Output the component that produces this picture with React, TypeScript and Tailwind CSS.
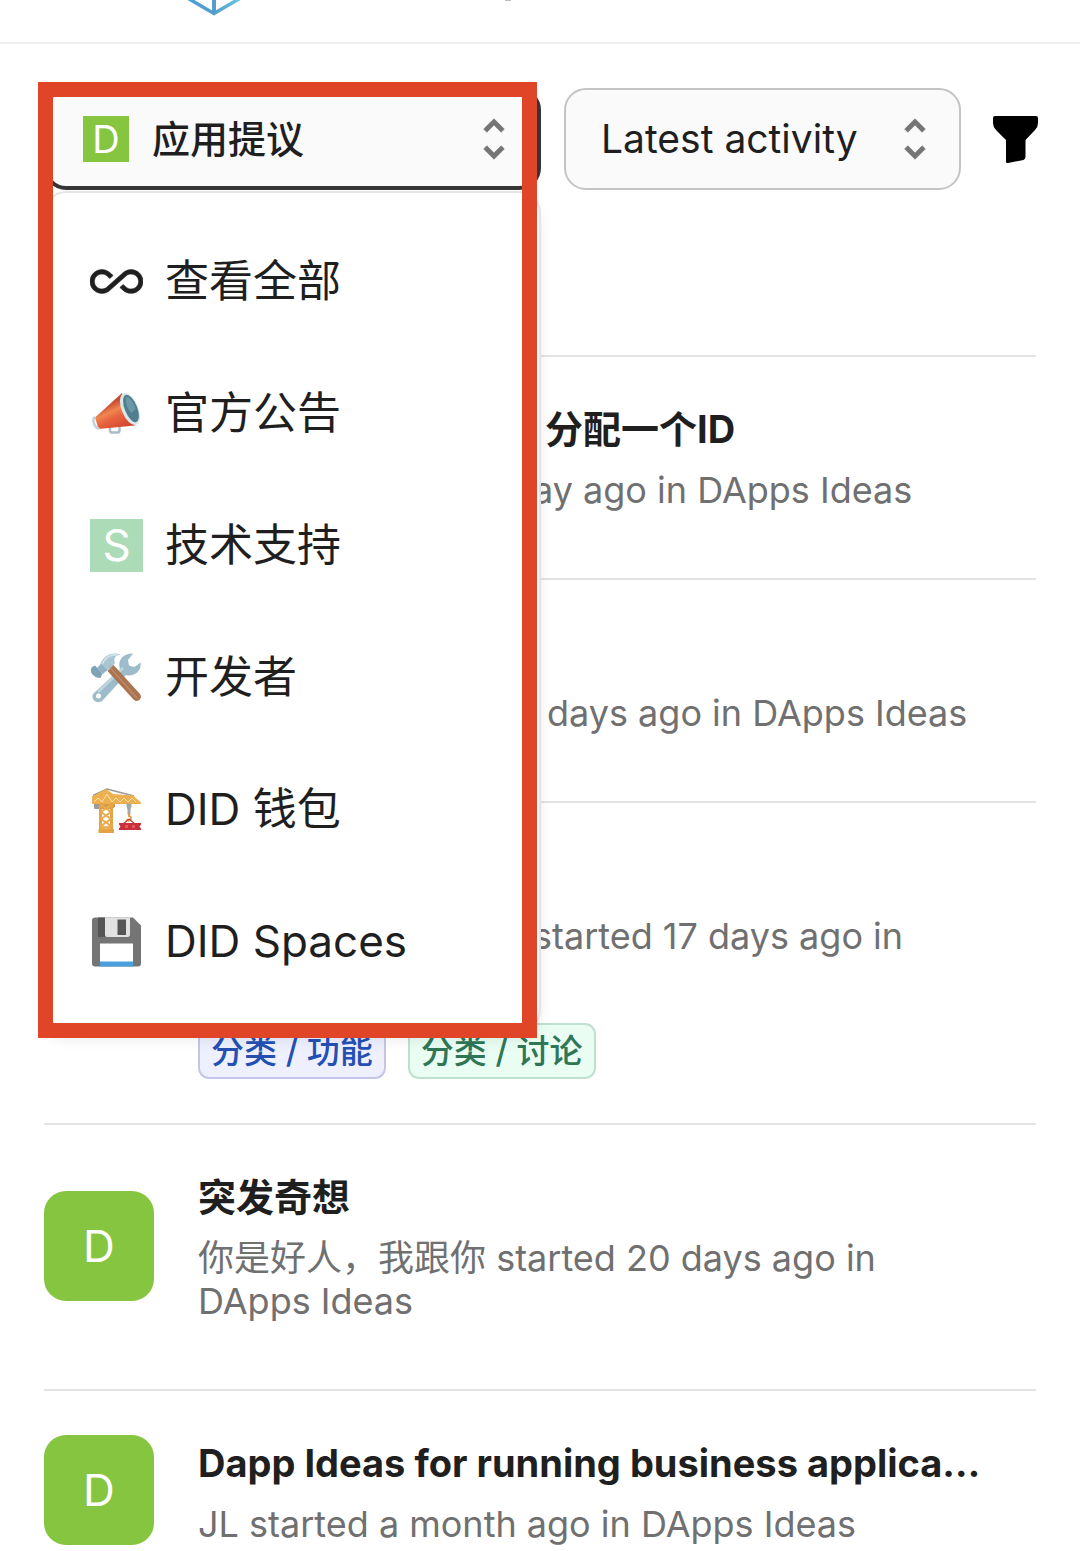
import React from "react";

const FONT = "font-['Inter','Noto_Sans_CJK_SC',sans-serif] [font-optical-sizing:none]";

function UnfoldIcon() {
  return (
    <svg viewBox="0 0 24 24" className="size-[54px] shrink-0 fill-[#757575] stroke-[#757575]" strokeWidth="0.3" aria-hidden="true">
      <path d="M12 5.83 15.17 9l1.41-1.41L12 3 7.41 7.59 8.83 9 12 5.83zm0 12.34L8.83 15l-1.41 1.41L12 21l4.59-4.59L15.17 15 12 18.17z" />
    </svg>
  );
}

function InfinityIcon() {
  return (
    <svg viewBox="0 0 24 24" className="size-full fill-[#1f1f1f] stroke-[#1f1f1f]" strokeWidth="0.25" aria-hidden="true">
      <path d="M18.6 6.62c-1.44 0-2.8.56-3.77 1.53L7.8 14.39c-.64.64-1.49.99-2.4.99-1.87 0-3.39-1.51-3.39-3.38S3.53 8.62 5.4 8.62c.91 0 1.76.35 2.44 1.03l1.13 1 1.51-1.34L9.22 8.2C8.2 7.18 6.84 6.62 5.4 6.62 2.42 6.62 0 9.04 0 12s2.42 5.38 5.4 5.38c1.44 0 2.8-.56 3.77-1.53l7.03-6.24c.64-.64 1.49-.99 2.4-.99 1.87 0 3.39 1.51 3.39 3.38s-1.52 3.38-3.39 3.38c-.9 0-1.76-.35-2.44-1.03l-1.14-1.01-1.51 1.34 1.27 1.12c1.02 1.01 2.37 1.57 3.82 1.57 2.98 0 5.4-2.41 5.4-5.38s-2.42-5.37-5.4-5.37z" />
    </svg>
  );
}

function MegaphoneIcon() {
  return (
    <svg viewBox="0 0 53 53" className="size-full" aria-hidden="true">
      <defs>
        <linearGradient id="horn" gradientUnits="userSpaceOnUse" x1="16" y1="18" x2="28" y2="43">
          <stop offset="0" stopColor="#c94a35" />
          <stop offset="0.3" stopColor="#f0864f" />
          <stop offset="0.55" stopColor="#e8623f" />
          <stop offset="1" stopColor="#d2492f" />
        </linearGradient>
      </defs>
      <path d="M20 40v3.500q0 2 2 2h5.500q2 0 2-2V39" fill="none" stroke="#a9bcc8" strokeWidth="2.400" />
      <path d="M5 30.500 32 6l13 32.500L8.500 42Z" fill="url(#horn)" />
      <path d="M4.500 30.500q-2 1.500-.5 6t4.500 5" fill="none" stroke="#c3d2da" strokeWidth="2.600" strokeLinecap="round" />
      <ellipse cx="40" cy="22" rx="8.300" ry="17" transform="rotate(-22 40 22)" fill="#d9e6eb" />
      <ellipse cx="41" cy="21.500" rx="6.200" ry="14.500" transform="rotate(-22 41 21.500)" fill="#4f7f8e" />
      <path d="M36 10c3-1 8 5 9.500 12l-4 4c-4-4-6.500-11-5.500-16Z" fill="#6b98a6" />
    </svg>
  );
}

function ToolsIcon() {
  return (
    <svg viewBox="0 0 53 53" className="size-full" aria-hidden="true">
      <path
        d="M3.500 42.500 30 18C27 10 33 2 43 2.500l-5 6.500 1 5.500 5.500 1.500 6-4.500c1.500 8-6 15-14.500 12.500L12.500 49.500c-5.500 5-13-2-9-7Z"
        fill="#9dbccb"
      />
      <path d="m8 41 25-24" stroke="#bfd6e0" strokeWidth="2.500" />
      <circle cx="8.500" cy="45" r="2.500" fill="#fff" />
      <path d="m17.500 20 6-6L50 43c3 4-2 9-6 6Z" fill="#a9744f" />
      <path d="m23.500 14-3 3L47 47" fill="none" stroke="#bd8965" strokeWidth="1.500" />
      <path d="M10 14C13 5 21 0 30.500 3.500c-6 1-7 4.500-5.500 8.500l-8.500 8.500c-3-2-5-1.500-7 .500Z" fill="#a8c5d2" />
      <path d="M12 13C16 6 22 3 28 4" fill="none" stroke="#cfe0e7" strokeWidth="2" />
      <path d="m2 16 3-1.500 7.500 8-2 4.500q-5 0-8-3.500T2 16Z" fill="#7fa3b4" />
      <path d="m7 17 4-4 6 6-4 4Z" fill="#90b2c2" />
    </svg>
  );
}

function CraneIcon() {
  return (
    <svg viewBox="0 0 53 53" className="size-full" aria-hidden="true">
      <path d="M3 12.500 17 6 44 13" fill="none" stroke="#9a9a94" strokeWidth="1.600" />
      <path d="M4 17h6v9H5q-1 0-1-1Z" fill="#9b9b9b" />
      <path d="M10 20h15v4l-3 2H10Z" fill="#d99a4c" />
      <path d="M2 13.500 16 6l7 5 20 1.500 8 7v1.500H2Z" fill="#eeb04f" />
      <path d="m4 19 4-4 4 4 5-8 5 8 4-4 4 4 4-4 4 4 4-4 4 4" fill="none" stroke="#fce3a8" strokeWidth="1" />
      <path d="M10.500 20v26M21.500 20v26" stroke="#e5a345" strokeWidth="3" />
      <path d="m11 22 10 7-10 7 10 7-10 3M21 22l-10 7 10 7-10 7 10 3" fill="none" stroke="#e9ad50" strokeWidth="2" />
      <path d="M8.500 46h15.500v4H8.500Z" fill="#e5a345" />
      <path d="M36.500 20.500h5v3l-1 3v5h-3v-5l-1-3Z" fill="#a3a7aa" />
      <path d="M39 30v3q3 1 1.500 3.500t-4-.2" fill="none" stroke="#dda04b" strokeWidth="2" />
      <path d="m39 36-7 6m7-6 7 6" stroke="#c34b45" strokeWidth="1.500" />
      <path d="M29 40h22v1.500l-1.500 2 1.500 2V47H29v-1.500l1.500-2-1.500-2Z" fill="#c8303c" />
      <path d="M35 42h3v3h-3ZM42 42h3v3h-3Z" fill="#e25a58" />
    </svg>
  );
}

function FloppyIcon() {
  return (
    <svg viewBox="0 0 53 53" className="size-full" aria-hidden="true">
      <path d="M5 2.500h38l8 8v38q0 3-3 3H5q-3 0-3-3v-43q0-3 3-3Z" fill="#757575" />
      <path d="M8 2.500h7V22H8Z" fill="#565656" />
      <path d="M15 2.500h25V19.500q0 2.500-2.500 2.500h-20Q15 22 15 19.500Z" fill="#e2e2e2" />
      <path d="M27.500 4.500H36V20h-8.500Z" fill="#565656" />
      <path d="M10 28.500h33V47H10Z" fill="#fff" />
      <path d="M10 46.500h33v5H10Z" fill="#4a9fdc" />
    </svg>
  );
}

function LetterTile() {
  return <span className="flex size-full items-center justify-center bg-[#acdbb8] text-[44px] text-white">S</span>;
}

const OPTIONS = [
  { label: "查看全部", icon: <InfinityIcon /> },
  { label: "官方公告", icon: <MegaphoneIcon /> },
  { label: "技术支持", icon: <LetterTile /> },
  { label: "开发者", icon: <ToolsIcon /> },
  { label: "DID 钱包", icon: <CraneIcon /> },
  { label: "DID Spaces", icon: <FloppyIcon /> },
];

function BoardSelect() {
  return (
    <div className="relative z-10 flex-1">
      <button
        type="button"
        aria-haspopup="listbox"
        aria-expanded="true"
        className="flex h-[102px] w-full items-center rounded-[22px] border-4 border-[#353535] bg-[#fafafa] pr-[16px] pl-[35px] text-left text-[38px] text-[#1f1f1f]"
      >
        <span className="mr-[23px] flex size-[46px] items-center justify-center bg-[#86c540] text-white">D</span>
        <span className="flex-1 font-medium">应用提议</span>
        <UnfoldIcon />
      </button>
      <ul
        role="listbox"
        aria-label="应用提议"
        className="absolute inset-x-0 top-[103px] rounded-[22px] border-2 border-[#e4e4e4] bg-white py-[22px] shadow-lg"
      >
        {OPTIONS.map((o) => (
          <li key={o.label} role="option" aria-selected="false" className="flex h-[132px] items-center gap-[22px] pl-11 text-[44px] text-[#1f1f1f]">
            <span className="size-[53px] shrink-0">{o.icon}</span>
            {o.label}
          </li>
        ))}
      </ul>
      <div className="pointer-events-none absolute -top-[6px] right-1 -left-[6px] h-[956px] border-[15px] border-[#e14528]" />
    </div>
  );
}

function Tag({ className, children }: { className: string; children: React.ReactNode }) {
  return (
    <a href="#" className={`h-[56px] rounded-[11px] border-2 px-[11px] text-[33px] leading-[52px] font-medium ${className}`}>
      {children}
    </a>
  );
}

function Avatar() {
  return (
    <div className="flex size-[110px] shrink-0 items-center justify-center rounded-[22px] bg-[#86c540] text-[44px] text-white">D</div>
  );
}

function Row({ title, titleInset = "", meta, avatar, inset = "", tags }: {
  title?: string;
  titleInset?: string;
  meta: string;
  avatar?: boolean;
  inset?: string;
  tags?: React.ReactNode;
}) {
  return (
    <li className="border-t-2 border-[#e3e3e3] pt-[43px] pb-11">
      <div className="flex items-center gap-11">
        {avatar && <Avatar />}
        <div className={`min-w-0 flex-1 ${inset}`}>
          <h2 className={`h-[58px] truncate text-[38px] leading-[58px] font-bold text-[#1f1f1f] ${titleInset}`}>{title}</h2>
          <p className="mt-[11px] text-[36px] leading-[43px] text-[#707070]">{meta}</p>
        </div>
      </div>
      <div className="mt-[22px] flex gap-[22px] pl-[154px]">{tags}</div>
    </li>
  );
}

export default function App() {
  return (
    <div className={`min-h-screen bg-white ${FONT}`}>
      <header className="flex h-[44px] items-start border-b-2 border-[#eeeeee] pl-[184px]">
        <svg viewBox="0 0 60 16" className="h-4 w-[60px]" aria-hidden="true">
          <defs>
            <linearGradient id="cube" x1="0" x2="1">
              <stop offset="0" stopColor="#4aa0dc" />
              <stop offset="0.5" stopColor="#539dc9" />
              <stop offset="1" stopColor="#67d0e0" />
            </linearGradient>
          </defs>
          <path d="M0-4 30 13.500 60-4M30-4V13" fill="none" stroke="url(#cube)" strokeWidth="3.500" />
          <path d="M30 0v13" stroke="#539dc9" strokeWidth="4" />
        </svg>
        <span className="ml-[261px] h-px w-[6px] bg-[#bdbdbd]" />
      </header>

      <div className="flex items-center pt-11 pr-[42px] pl-11">
        <BoardSelect />
        <div className="relative ml-[23px] w-[397px]">
          <select
            aria-label="Sort by"
            className="h-[102px] w-full appearance-none rounded-[22px] border-2 border-[#c4c4c4] bg-[#fafafa] pl-[35px] text-[39px] text-[#1f1f1f]"
          >
            <option>Latest activity</option>
          </select>
          <span className="pointer-events-none absolute inset-y-0 right-[19px] flex items-center">
            <UnfoldIcon />
          </span>
        </div>
        <button type="button" aria-label="Filter" className="ml-8">
          <svg viewBox="0 0 45 48" className="h-12 w-[45px]" aria-hidden="true">
            <path d="M2 1h41q2 0 2 2v5q0 4-3 7L32.500 25v17q0 2-2 3L15 48q-2 .500-2-1.500V25L3 15Q0 12 0 8V3Q0 1 2 1Z" />
          </svg>
        </button>
      </div>

      <ul className="mx-11 mt-[165px]">
        <Row title="分配一个ID" titleInset="pl-3" meta="ay ago in DApps Ideas" inset="pl-[489px]" />
        <Row meta="days ago in DApps Ideas" inset="pl-[503px]" />
        <Row
          meta="started 17 days ago in"
          inset="pl-[489px] pb-[43px]"
          tags={
            <>
              <Tag className="border-[#c5c5ec] bg-[#eef0ff] text-[#2450b4]">分类 / 功能</Tag>
              <Tag className="border-[#bfe0cf] bg-[#e9fdf3] text-[#2e7656]">分类 / 讨论</Tag>
            </>
          }
        />
        <Row avatar title="突发奇想" meta="你是好人，我跟你 started 20 days ago in DApps Ideas" inset="pr-11" />
        <Row avatar title="Dapp Ideas for running business applica…" meta="JL started a month ago in DApps Ideas" />
      </ul>
    </div>
  );
}
